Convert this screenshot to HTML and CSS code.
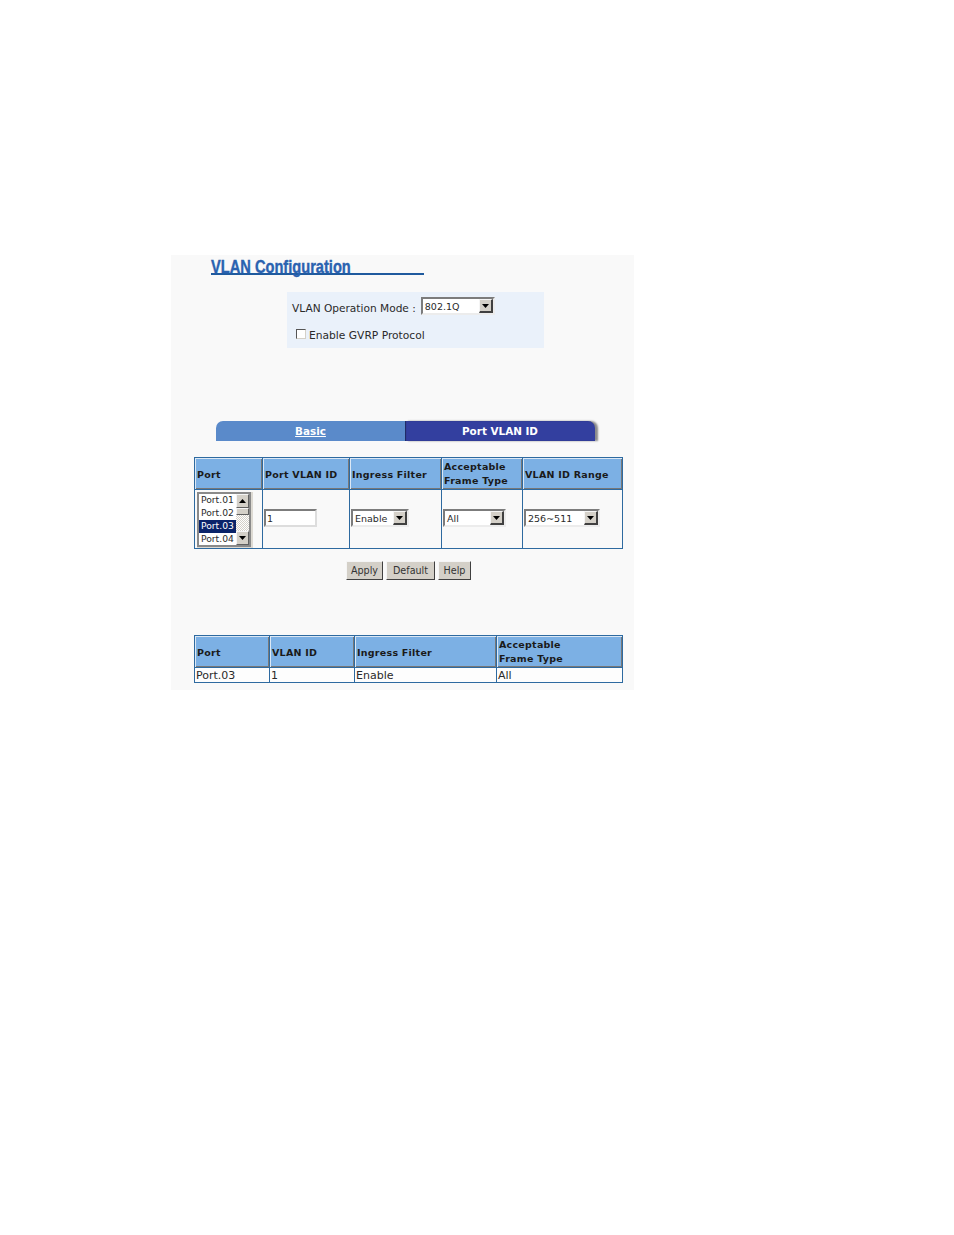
FILE: index.html
```html
<!doctype html>
<html lang="en">
<head>
<meta charset="UTF-8">
<title>VLAN Configuration</title>
<link rel="stylesheet" href="styles.css">
</head>
<body>
	<div class="panel">
		<h1 class="title"><span>VLAN Configuration</span></h1>

		<!-- operation mode box -->
		<div class="mode_box">
			<div class="mode_row">
				<span>VLAN Operation Mode :</span>
				<div class="select sel_mode">
					<span class="sel_text">802.1Q</span>
					<span class="sel_btn"><svg width="7" height="4" viewBox="0 0 7 4"><path d="M0 0h7L3.5 4z"/></svg></span>
				</div>
			</div>
			<div class="gvrp_row">
				<span class="checkbox"></span>
				<span>Enable GVRP Protocol</span>
			</div>
		</div>

		<!-- tabs -->
		<div class="tabs">
			<a class="tab tab_basic">Basic</a>
			<div class="tab tab_port">Port VLAN ID</div>
		</div>

		<table class="grid grid_top">
			<colgroup>
				<col class="c1"><col class="c2"><col class="c3"><col class="c4"><col class="c5">
			</colgroup>
			<tr class="head">
				<th class="one">Port</th>
				<th class="one">Port VLAN ID</th>
				<th class="one">Ingress Filter</th>
				<th>Acceptable<br>Frame Type</th>
				<th class="one">VLAN ID Range</th>
			</tr>
			<tr class="body_row">
				<td>
					<div class="listbox">
						<div class="list_items">
							<div>Port.01</div>
							<div>Port.02</div>
							<div class="selected">Port.03</div>
							<div>Port.04</div>
						</div>
						<div class="scrollbar">
							<span class="sel_btn"><svg width="7" height="4" viewBox="0 0 7 4"><path d="M0 4h7L3.5 0z"/></svg></span>
							<span class="thumb"></span>
							<span class="track"></span>
							<span class="sel_btn"><svg width="7" height="4" viewBox="0 0 7 4"><path d="M0 0h7L3.5 4z"/></svg></span>
						</div>
					</div>
				</td>
				<td><input class="text_input" type="text" value="1"></td>
				<td>
					<div class="select sel_ingress">
						<span class="sel_text">Enable</span>
						<span class="sel_btn"><svg width="7" height="4" viewBox="0 0 7 4"><path d="M0 0h7L3.5 4z"/></svg></span>
					</div>
				</td>
				<td>
					<div class="select sel_frame">
						<span class="sel_text">All</span>
						<span class="sel_btn"><svg width="7" height="4" viewBox="0 0 7 4"><path d="M0 0h7L3.5 4z"/></svg></span>
					</div>
				</td>
				<td>
					<div class="select sel_range">
						<span class="sel_text">256~511</span>
						<span class="sel_btn"><svg width="7" height="4" viewBox="0 0 7 4"><path d="M0 0h7L3.5 4z"/></svg></span>
					</div>
				</td>
			</tr>
		</table>

		<div class="buttons">
			<button class="btn btn_apply">Apply</button>
			<button class="btn btn_default">Default</button>
			<button class="btn btn_help">Help</button>
		</div>

		<table class="grid grid_bottom">
			<colgroup>
				<col class="d1"><col class="d2"><col class="d3"><col class="d4">
			</colgroup>
			<tr class="head">
				<th class="one">Port</th>
				<th class="one">VLAN ID</th>
				<th class="one">Ingress Filter</th>
				<th>Acceptable<br>Frame Type</th>
			</tr>
			<tr class="result_row">
				<td>Port.03</td>
				<td>1</td>
				<td>Enable</td>
				<td>All</td>
			</tr>
		</table>
	</div>
</body>
</html>
```

FILE: styles.css
```css
html, body{
	margin:0; background-color:#ffffff;
}
body{
	padding:255px 0 0 171px;
	height:980px; box-sizing:border-box;
	font-family:"DejaVu Sans", Verdana, sans-serif;
	font-size:11px; color:#2a2a2a;
}
.panel{
	width:463px; height:435px;
	background-color:#f9f9f9;
	overflow:hidden;
}
.title{
	margin:4px 0 0 40px; width:213px; height:14px;
	border-bottom:2px solid #1f5a9e;
	font-family:"Liberation Sans", Arial, sans-serif;
	font-size:19px; line-height:15px; font-weight:bold;
	color:#2a62b0; white-space:nowrap;
}
.title span{
	display:inline-block; transform:scaleX(0.77); transform-origin:left;
	-webkit-text-stroke:0.4px #2a62b0;
}
.mode_box{
	margin:17px 0 0 116px; width:257px; height:56px;
	background-color:#eaf1fa;
	padding:5px 0 0 5px; box-sizing:border-box;
}
.mode_row{
	display:flex; align-items:flex-start; gap:5px;
	height:23px; line-height:21px; font-size:10.6px;
}
.mode_row > span{
	padding-top:1px;
}
.gvrp_row{
	display:flex; align-items:center; gap:3px;
	margin:8px 0 0 4px; height:14px; font-size:10.7px;
}
.checkbox{
	width:8px; height:8px; margin-bottom:2px; background-color:#ffffff;
	border:1px solid; border-color:#555555 #d4d0c8 #d4d0c8 #555555;
}
.select{
	display:flex; align-items:center; box-sizing:border-box;
	height:18px;
	background-color:#ffffff;
	border:2px solid; border-color:#7c7c7c #ececec #ececec #7c7c7c;
	font-size:9.5px; line-height:13px;
}
.sel_text{
	flex:1; padding-left:2px;
}
.sel_btn{
	display:flex; align-items:center; justify-content:center;
	width:14px; height:14px; flex:none;
	background-color:#d4d0c8;
	border:1px solid; border-color:#f5f5f5 #404040 #404040 #f5f5f5;
	border-right-width:2px; border-bottom-width:2px;
	box-sizing:border-box;
}
.sel_mode{ width:74px; }
.sel_ingress{ width:58px; margin:0 0 2px 1px; }
.sel_frame{ width:63px; margin:0 0 2px 1px; }
.sel_range{ width:76px; margin:0 0 2px 1px; }
.tabs{
	display:flex; margin:73px 0 0 45px; height:20px;
	width:382px; box-sizing:border-box;
}
.tab{
	display:block; height:20px; line-height:21px;
	text-align:center; font-size:10.4px; font-weight:bold;
	color:#ffffff;
}
.tab_basic{
	width:189px; background-color:#5a8aca;
	border-radius:7px 0 0 0; text-decoration:underline;
}
.tab_port{
	width:190px; background-color:#333f9f;
	border-radius:0 7px 0 0;
	box-shadow:inset 1px 0 1px #1f2a60, 3px 0 2px #8a8a8a;
}
.grid{
	border-collapse:collapse; table-layout:fixed;
	margin-left:23px; width:428px;
	border:1px solid #2e6aa0;
}
.grid_top{ margin-top:16px; }
.grid_bottom{ margin-top:55px; }
.c1{ width:68px; } .c2{ width:87px; } .c3{ width:92px; } .c4{ width:81px; } .c5{ width:100px; }
.d1{ width:75px; } .d2{ width:85px; } .d3{ width:142px; } .d4{ width:126px; }
.grid th{
	background-color:#7cb0e4;
	border:1px solid #2e6aa0;
	box-shadow:inset 1px 1px 0 #dce8f5, inset -1px -1px 0 #777777;
	padding:0 0 0 2px; text-align:left;
	font-size:9.5px; line-height:13.5px; font-weight:bold;
	color:#1a1a1a; letter-spacing:0.25px;
}
.grid_top th.one{ padding-top:3px; }
.grid_bottom th.one{ padding-top:2px; }
.grid td{
	border:1px solid #2e6aa0; padding:0;
	background-color:#f9f9f9;
}
.grid_top .head{ height:32px; }
.grid_bottom .head{ height:32px; }
.body_row{ height:59px; }
.result_row{ height:14px; }
.grid .result_row td{
	font-size:11px; line-height:12px; padding:2px 0 0 1px;
	background-color:#fdfdfd;
}
.listbox{
	display:flex; width:54px; height:55px; margin-left:2px;
	box-sizing:border-box; background-color:#ffffff;
	border:2px solid #8a8a8a;
	box-shadow:1px 1px 0 1px #dddad3;
}
.list_items{
	flex:1; font-size:9.2px; line-height:12px;
}
.list_items div{
	height:13px; padding-left:2px;
}
.list_items .selected{
	background-color:#0a246a; color:#ffffff;
}
.scrollbar{
	display:flex; flex-direction:column; width:13px;
}
.scrollbar .sel_btn{
	width:13px; height:14px;
	border-width:1px; border-color:#f5f5f5 #606060 #606060 #f5f5f5;
}
.thumb{
	height:7px; background-color:#d4d0c8; box-sizing:border-box;
	border:1px solid; border-color:#f5f5f5 #606060 #606060 #f5f5f5;
}
.track{
	flex:1;
	background-color:#e4e4e4;
	background-image:repeating-conic-gradient(#d4d0c8 0 25%, #ffffff 0 50%);
	background-size:2px 2px;
}
.text_input{
	display:block; width:53px; height:18px; margin:0 0 2px 1px;
	box-sizing:border-box; padding:0 0 0 1px;
	border:2px solid; border-color:#7c7c7c #dddddd #dddddd #7c7c7c;
	background-color:#ffffff; color:#2a2a2a;
	font-family:"DejaVu Sans", Verdana, sans-serif; font-size:9.5px;
}
.buttons{
	display:flex; gap:3px; margin:12px 0 0 175px; height:19px;
}
.btn{
	height:19px; padding:0; box-sizing:border-box;
	background-color:#d4d0c8; color:#333333;
	border:1px solid; border-color:#f5f5f5 #404040 #404040 #f5f5f5;
	font-family:"DejaVu Sans", Verdana, sans-serif; font-size:9.6px;
}
.btn_apply{ width:37px; }
.btn_default{ width:49px; }
.btn_help{ width:33px; }
```
